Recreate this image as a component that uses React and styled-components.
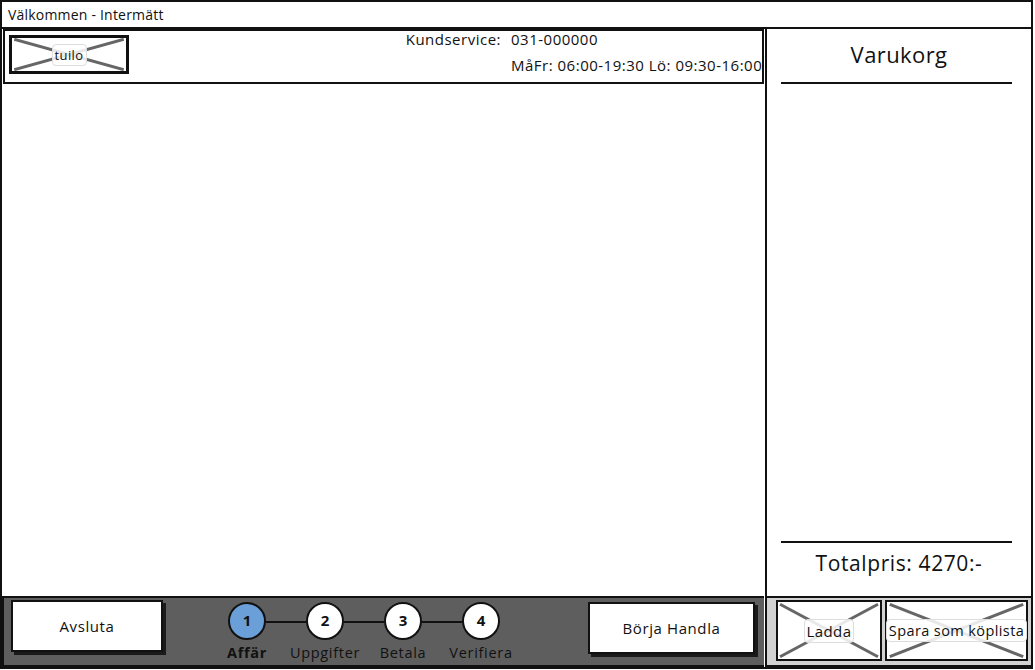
import styled, { createGlobalStyle } from "styled-components";

const Global = createGlobalStyle`
  html, body {
    margin: 0;
    padding: 0;
    background: white;
  }
  body {
    font-family: "Open Sans", Lato, sans-serif;
    color: #111;
  }
`;

const Window = styled.div`
  width: 1033px;
  height: 669px;
  box-sizing: border-box;
  border: 2px solid #111;
  display: flex;
  flex-direction: column;
  overflow: hidden;
`;

const TitleBar = styled.div`
  height: 25px;
  flex-shrink: 0;
  border-bottom: 2px solid #111;
  display: flex;
  align-items: center;
  padding-left: 6px;
  font-size: 14px;
  letter-spacing: 0.2px;
`;

const Body = styled.div`
  flex: 1;
  display: flex;
  min-height: 0;
`;

const LeftColumn = styled.div`
  width: 762px;
  display: flex;
  flex-direction: column;
`;

const Header = styled.div`
  height: 55px;
  box-sizing: border-box;
  margin-left: 1px;
  border: 2px solid #111;
  display: flex;
  align-items: flex-start;
  overflow: hidden;
  white-space: nowrap;
`;

const LogoSlot = styled.div`
  margin: 4px 0 0 4px;
`;

const Placeholder = styled.div`
  position: relative;
  box-sizing: border-box;
  width: ${(p) => p.$w}px;
  height: ${(p) => p.$h}px;
  border: ${(p) => p.$b || 2}px solid #111;
  background: white;
  display: flex;
  align-items: center;
  justify-content: center;
  flex-shrink: 0;
`;

const Cross = styled.svg`
  position: absolute;
  inset: 0;
  width: 100%;
  height: 100%;
`;

const PlaceLabel = styled.span`
  position: relative;
  padding: 1px 2px;
  border: 1px solid #ddd;
  border-radius: 4px;
  background: rgba(255, 255, 255, 0.85);
  font-size: ${(p) => p.$size || 14}px;
  letter-spacing: 0.4px;
  color: #111;
  white-space: nowrap;
`;

const Info = styled.div`
  margin-left: 276px;
  margin-top: -2px;
  display: grid;
  grid-template-columns: 96px auto;
  column-gap: 10px;
  row-gap: 6px;
  font-size: 15px;
  letter-spacing: 0.5px;
  line-height: 20px;
`;

const InfoLabel = styled.span`
  text-align: right;
`;

const Content = styled.div`
  flex: 1;
  background: white;
`;

const BottomBar = styled.div`
  height: 71px;
  box-sizing: border-box;
  border: 2px solid #111;
  border-right: none;
  background: #5e5e5e;
  display: flex;
  align-items: flex-start;
  padding: 2px 9px 0 7px;
`;

const ActionButton = styled.button`
  width: ${(p) => p.$w}px;
  height: 52px;
  margin-top: ${(p) => p.$top || 0}px;
  box-sizing: border-box;
  border: 2px solid #111;
  background: white;
  box-shadow: 3px 3px 0 #1a1a1a;
  font-family: "Open Sans", sans-serif;
  font-size: 15px;
  letter-spacing: 0.6px;
  color: #111;
  padding: 0;
`;

const Stepper = styled.div`
  display: flex;
  align-items: flex-start;
  margin-left: 65px;
  margin-top: 2px;
`;

const Step = styled.div`
  width: 38px;
  display: flex;
  flex-direction: column;
  align-items: center;
`;

const Circle = styled.div`
  width: 38px;
  height: 38px;
  box-sizing: border-box;
  border-radius: 50%;
  border: 2px solid #111;
  background: ${(p) => (p.$active ? "#6b9fd8" : "white")};
  display: flex;
  align-items: center;
  justify-content: center;
  font-size: 15px;
  font-weight: 700;
  padding-bottom: 3px;
`;

const StepLabel = styled.span`
  margin-top: 3px;
  font-size: 14.5px;
  font-weight: ${(p) => (p.$active ? 700 : 400)};
  letter-spacing: 0.7px;
  color: #111;
  white-space: nowrap;
`;

const Connector = styled.div`
  width: 40px;
  height: 2px;
  margin-top: 19px;
  background: #111;
`;

const Spacer = styled.div`
  flex: 1;
`;

const RightColumn = styled.div`
  flex: 1;
  display: flex;
  flex-direction: column;
  margin-left: 1px;
`;

const Cart = styled.div`
  flex: 1;
  border-left: 2px solid #111;
  display: flex;
  flex-direction: column;
`;

const CartTitle = styled.div`
  height: 53px;
  display: flex;
  align-items: center;
  justify-content: center;
  font-size: 22px;
  letter-spacing: 0.4px;
  padding-bottom: 4px;
  box-sizing: border-box;
`;

const Divider = styled.div`
  height: 2px;
  margin: 0 19px 0 14px;
  background: #111;
`;

const CartList = styled.div`
  flex: 1;
`;

const Total = styled.div`
  height: 53px;
  box-sizing: border-box;
  display: flex;
  align-items: center;
  justify-content: center;
  font-size: 21px;
  letter-spacing: 0.6px;
  padding-bottom: 14px;
`;

const CartActions = styled.div`
  height: 71px;
  box-sizing: border-box;
  border: 2px solid #111;
  border-right: none;
  background: #d2d2d2;
  display: flex;
  align-items: flex-start;
  gap: 3px;
  padding: 2px 0 0 9px;
`;

function XBox({ w, h, b, label, size }) {
  return (
    <Placeholder $w={w} $h={h} $b={b}>
      <Cross viewBox="0 0 100 100" preserveAspectRatio="none">
        <line x1="2" y1="4" x2="98" y2="96" stroke="#666" strokeWidth="3" vectorEffect="non-scaling-stroke" />
        <line x1="2" y1="96" x2="98" y2="4" stroke="#666" strokeWidth="3" vectorEffect="non-scaling-stroke" />
      </Cross>
      <PlaceLabel $size={size}>{label}</PlaceLabel>
    </Placeholder>
  );
}

const steps = [
  { n: 1, label: "Affär", active: true },
  { n: 2, label: "Uppgifter" },
  { n: 3, label: "Betala" },
  { n: 4, label: "Verifiera" },
];

export default function App() {
  const stepItems = [];
  steps.forEach((s, i) => {
    if (i > 0) stepItems.push(<Connector key={"c" + s.n} />);
    stepItems.push(
      <Step key={s.n}>
        <Circle $active={s.active}>{s.n}</Circle>
        <StepLabel $active={s.active}>{s.label}</StepLabel>
      </Step>
    );
  });

  return (
    <>
      <Global />
      <Window>
        <TitleBar>Välkommen - Intermätt</TitleBar>
        <Body>
          <LeftColumn>
            <Header>
              <LogoSlot>
                <XBox w={120} h={39} b={3} label="tuilo" size={13} />
              </LogoSlot>
              <Info>
                <InfoLabel>Kundservice:</InfoLabel>
                <span>031-000000</span>
                <span />
                <span>MåFr: 06:00-19:30 Lö: 09:30-16:00</span>
              </Info>
            </Header>
            <Content />
            <BottomBar>
              <ActionButton $w={152}>Avsluta</ActionButton>
              <Stepper>{stepItems}</Stepper>
              <Spacer />
              <ActionButton $w={167} $top={2}>Börja Handla</ActionButton>
            </BottomBar>
          </LeftColumn>
          <RightColumn>
            <Cart>
              <CartTitle>Varukorg</CartTitle>
              <Divider />
              <CartList />
              <Divider />
              <Total>Totalpris: 4270:-</Total>
            </Cart>
            <CartActions>
              <XBox w={106} h={61} label="Ladda" size={15} />
              <XBox w={143} h={61} label="Spara som köplista" size={14.5} />
            </CartActions>
          </RightColumn>
        </Body>
      </Window>
    </>
  );
}
